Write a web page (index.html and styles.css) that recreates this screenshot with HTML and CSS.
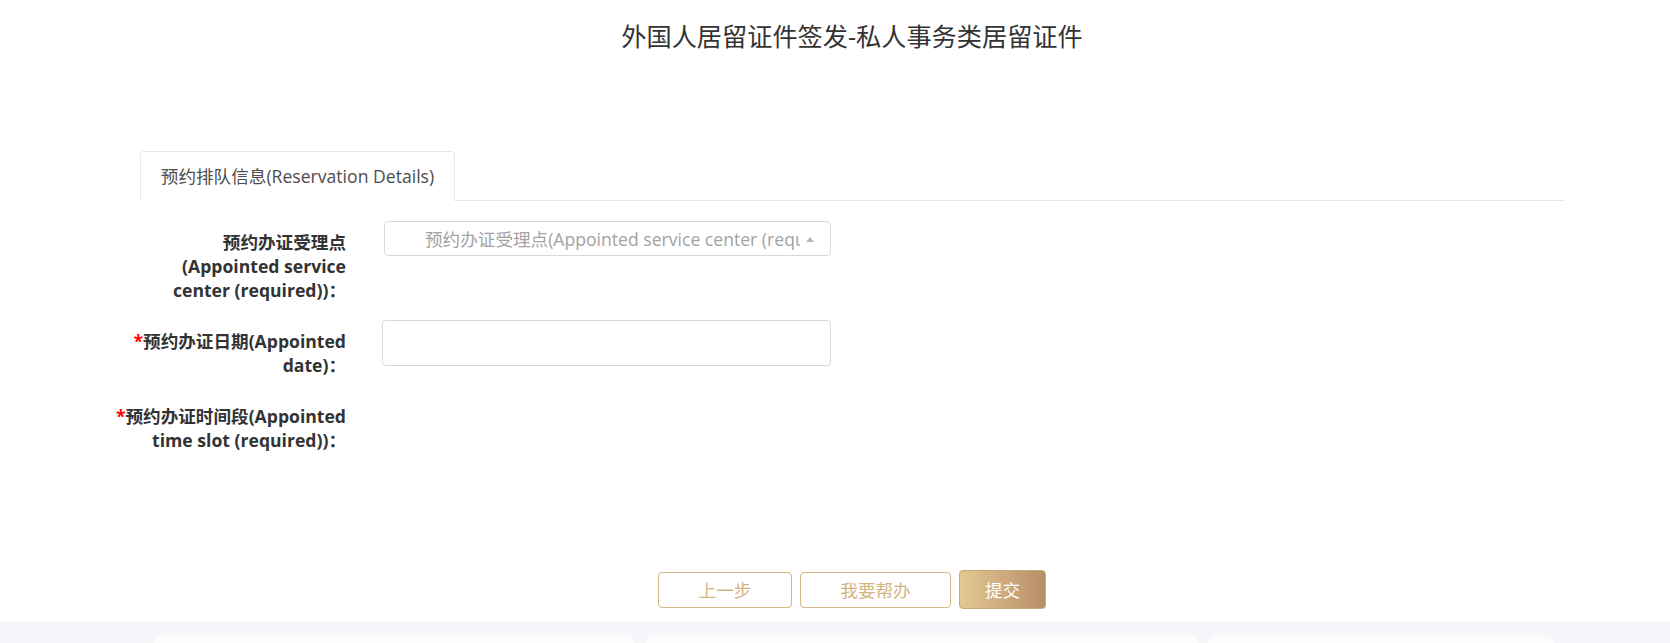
FILE: index.html
```html
<!DOCTYPE html>
<html lang="zh-CN">
<head>
<meta charset="utf-8">
<title>外国人居留证件签发-私人事务类居留证件</title>
<link rel="stylesheet" href="styles.css">
</head>
<body>
<div class="page">
  <div class="main">
    <h1 class="title">外国人居留证件签发-私人事务类居留证件</h1>
    <div class="tabs">
      <div class="tab active">预约排队信息(Reservation Details)</div>
    </div>
  </div>

  <form class="form">
    <div class="row">
      <label class="label label-narrow">预约办证受理点(Appointed service center (required))：</label>
      <div class="field">
        <div class="select">
          <span class="placeholder">预约办证受理点(Appointed service center (required))</span>
          <span class="arrow"></span>
        </div>
      </div>
    </div>
    <div class="row">
      <label class="label"><span class="req">*</span>预约办证日期(Appointed date)：</label>
      <div class="field">
        <div class="date-input"></div>
      </div>
    </div>
    <div class="row">
      <label class="label"><span class="req">*</span>预约办证时间段(Appointed time slot (required))：</label>
      <div class="field"></div>
    </div>
  </form>

  <div class="actions">
    <button type="button" class="btn btn-outline btn-prev">上一步</button>
    <button type="button" class="btn btn-outline btn-help">我要帮办</button>
    <button type="button" class="btn btn-primary">提交</button>
  </div>

  <div class="footer">
    <div class="card card-1"></div>
    <div class="card card-2"></div>
    <div class="card card-3"></div>
  </div>
</div>
</body>
</html>
```

FILE: styles.css
```css
* {
  box-sizing: border-box;
}

html, body {
  margin: 0;
  padding: 0;
  background: #ffffff;
}

body {
  font-family: "Open Sans", "Noto Sans CJK SC", sans-serif;
  color: #333333;
  overflow: hidden;
}

.page {
  width: 1670px;
}

.main {
  margin-left: 140px;
  width: 1424px;
}

.title {
  margin: 0;
  height: 72px;
  line-height: 72px;
  font-size: 25.2px;
  font-weight: 400;
  color: #333333;
  text-align: center;
}

.tabs {
  margin-top: 79px;
  display: flex;
  height: 50px;
  border-bottom: 1px solid #e4e7ed;
}

.tab {
  width: 315px;
  height: 50px;
  line-height: 48px;
  text-align: center;
  font-size: 17.6px;
  color: #4d4d4d;
  border: 1px solid #e4e7ed;
  border-bottom: 1px solid #ffffff;
  border-radius: 4px 4px 0 0;
  background: #ffffff;
  white-space: nowrap;
}

.form {
  margin-top: 20px;
  margin-left: 100px;
  display: flex;
  flex-direction: column;
  gap: 18px;
}

.row {
  display: grid;
  grid-template-columns: 246px 449px;
  column-gap: 36px;
  align-items: start;
}

.label {
  padding-top: 9px;
  text-align: right;
  font-size: 17.6px;
  line-height: 24px;
  font-weight: 700;
  color: #333333;
}

.label-narrow {
  padding-left: 46px;
}

.req {
  color: #ff0000;
}

.field {
  min-height: 10px;
}

.select {
  position: relative;
  margin-left: 2px;
  height: 35px;
  border: 1px solid #d6d9df;
  border-radius: 4px;
  padding: 0 30px 0 40px;
  display: flex;
  align-items: center;
  overflow: hidden;
  white-space: nowrap;
}

.placeholder {
  font-size: 17.6px;
  color: #a3a3a3;
  overflow: hidden;
  white-space: nowrap;
}

.arrow {
  position: absolute;
  right: 16px;
  top: 15px;
  width: 0;
  height: 0;
  border-left: 4px solid transparent;
  border-right: 4px solid transparent;
  border-bottom: 5px solid #b8b8b8;
}

.date-input {
  height: 46px;
  border: 1px solid #d6d9df;
  border-radius: 4px;
}

.actions {
  margin-top: 118px;
  margin-left: 140px;
  width: 1424px;
  display: flex;
  justify-content: center;
  align-items: center;
  gap: 8px;
}

.btn {
  font-family: "Open Sans", "Noto Sans CJK SC", sans-serif;
  font-size: 17.6px;
  border-radius: 4px;
  padding: 0;
  cursor: pointer;
}

.btn-outline {
  height: 36px;
  background: #ffffff;
  border: 1px solid #d6b985;
  color: #d2b482;
}

.btn-prev {
  width: 134px;
}

.btn-help {
  width: 151px;
}

.btn-primary {
  width: 87px;
  height: 39px;
  border: 1px solid #c9a978;
  color: #ffffff;
  background: linear-gradient(90deg, #e4c792 0%, #b98f68 100%);
}

.footer {
  margin-top: 13px;
  background: #f4f6fa;
  padding-top: 13px;
  display: flex;
  gap: 10px;
  padding-left: 154px;
  height: 120px;
}

.card {
  background: #fcfcfc;
  border-radius: 8px;
  height: 100px;
}

.card-1 {
  width: 481px;
}

.card-2 {
  width: 551px;
  margin-left: 1px;
}

.card-3 {
  width: 345px;
  margin-left: 1px;
}
```
